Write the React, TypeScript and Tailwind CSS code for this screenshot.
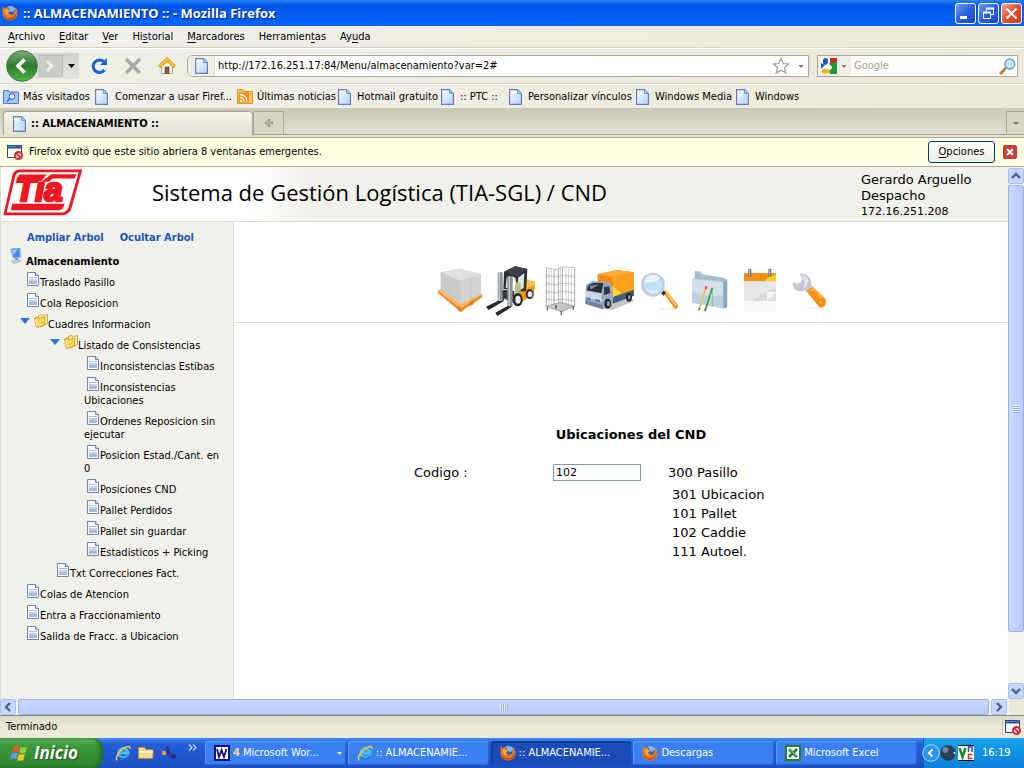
import React from "react";

const ui = "font-['DejaVu_Sans_Condensed','Noto_Sans',sans-serif]";
const verdana = "font-['DejaVu_Sans',sans-serif]";

/* ---------- small icons ---------- */

function Firefox({ className }: { className: string }) {
  return (
    <svg viewBox="0 0 16 16" className={className} aria-hidden="true">
      <circle cx="8.500" cy="7" r="6.400" fill="#2a62c4" />
      <path d="M6 1.500C8 .5 12 1 13.500 4l-3 3-3-1z" fill="#7db8ee" />
      <path d="M1 1l1.800 2.500C3.500 2.500 5 2 6.500 2.500L5.500 4.500l3 1.200-2 1.300c0 2.500 2.500 3.500 5 2.200 1.500-1.200 1.200-3 .5-4.700l1.200.6L13 2.500c2 1.600 2.800 4 2.500 6.500-.6 4-3.800 6.500-7.500 6.500S1 13 .6 9C.4 6 .4 3 1 1z" fill="#ee7a1c" />
      <path d="M1.500 8c1 4 4.500 6 8 5 2.800-.8 4.500-3 5-6 .3 4.500-2.500 7.800-6.500 7.800S1.800 12 1.500 8z" fill="#c4420c" />
      <path d="M2.500 4.500C4 3.500 5 4 5.500 4.500L8 6 6 7.200C5.500 9 6.500 10 8 10.500 5 11 3 9 2.500 4.500z" fill="#f9a935" />
    </svg>
  );
}

function Page({ className = "w-[13px] h-4 shrink-0" }: { className?: string }) {
  return (
    <svg viewBox="0 0 13 16" className={className} aria-hidden="true">
      <defs>
        <linearGradient id="pg" x1="0" y1="0" x2="1" y2="1">
          <stop offset="0" stopColor="#fff" />
          <stop offset="1" stopColor="#a9d4ff" />
        </linearGradient>
      </defs>
      <path d="M.6.600H8.500l3.900 3.900v10.900H.6z" fill="url(#pg)" stroke="#7076b8" strokeWidth="1.200" />
      <path d="M8.500.600v3.900h3.900z" fill="#a8cdf5" stroke="#6a9bd8" strokeWidth="1" />
    </svg>
  );
}

function PopupBlocked({ className = "w-4 h-4 shrink-0" }: { className?: string }) {
  return (
    <svg viewBox="0 0 16 16" className={className} aria-hidden="true">
      <path d="M.5 1.500h14v12H.5z" fill="#fff" stroke="#1c4594" />
      <path d="M0 1h15v3.500H0z" fill="#1f4fa8" />
      <path d="M1 2h8v1H1z" fill="#5a86d8" />
      <path d="M10 2h1.500v1H10zM12.500 2H14v1h-1.500z" fill="#e8583a" />
      <circle cx="11.500" cy="11.500" r="3.500" fill="#fff" stroke="#d8242a" strokeWidth="2" />
      <path d="M9 9l5 5" stroke="#d8242a" strokeWidth="1.800" />
    </svg>
  );
}

function Ie({ className = "w-4 h-4 shrink-0" }: { className?: string }) {
  return (
    <svg viewBox="0 0 16 16" className={className} aria-hidden="true">
      <path d="M12.500 10.500A4.700 4.700 0 1 1 13 7.900H5" fill="none" stroke="#4bbdf3" strokeWidth="3" />
      <path d="M12.800 11.500A5.500 5.500 0 0 1 4 12" fill="none" stroke="#1470c8" strokeWidth="1.400" />
      <path d="M2.500 15C-.5 14.500 3 7 8 3.800 12 1 16 .5 14.800 4" fill="none" stroke="#f8c53c" strokeWidth="1.500" />
    </svg>
  );
}

function Caret({ className }: { className: string }) {
  return (
    <svg viewBox="0 0 7 4" className={className} aria-hidden="true">
      <path d="M0 0h7L3.500 4z" fill="currentColor" />
    </svg>
  );
}

/* ---------- title, menu and navigation bars ---------- */

function TitleBar() {
  const btn =
    "flex h-[21px] w-[21px] items-center justify-center rounded-[3px] border border-white bg-linear-to-br";
  return (
    <header className="flex h-[26px] items-center bg-linear-to-b from-[#2a86f5] via-[#0055e6] via-20% to-[#0366f8] pr-[2px] pl-[2px]">
      <Firefox className="h-4 w-4 shrink-0" />
      <h1 className="ml-[5px] flex-1 truncate font-['Open_Sans',sans-serif] text-[13px] leading-[20px] font-bold text-white [text-shadow:1px_1px_1px_#0a1883]">
        :: ALMACENAMIENTO :: - Mozilla Firefox
      </h1>
      <div className="flex gap-[2px]">
        <button aria-label="Minimizar" className={`${btn} from-[#6f9cf8] via-[#2a5fe0] to-[#1a48c8]`}>
          <svg viewBox="0 0 19 19" className="h-[19px] w-[19px]"><path d="M4 12h7v3H4z" fill="#fff" /></svg>
        </button>
        <button aria-label="Restaurar" className={`${btn} from-[#6f9cf8] via-[#2a5fe0] to-[#1a48c8]`}>
          <svg viewBox="0 0 19 19" className="h-[19px] w-[19px]" fill="none" stroke="#fff">
            <path d="M4.500 8.500h7v6h-7zM7.500 7V4.500h7v6H12" />
            <path d="M4 8.500h8M7 4.500h8" strokeWidth="2" />
          </svg>
        </button>
        <button aria-label="Cerrar" className={`${btn} from-[#f0a088] via-[#e0502e] to-[#c83a14]`}>
          <svg viewBox="0 0 19 19" className="h-[19px] w-[19px]"><path d="M4.500 4.500l10 10M14.500 4.500l-10 10" stroke="#fff" strokeWidth="2.200" /></svg>
        </button>
      </div>
    </header>
  );
}

const menus: [string, string, string][] = [
  ["", "A", "rchivo"],
  ["", "E", "ditar"],
  ["", "V", "er"],
  ["Hi", "s", "torial"],
  ["", "M", "arcadores"],
  ["Herramien", "t", "as"],
  ["Ay", "u", "da"],
];

function MenuBar() {
  return (
    <nav className="flex h-[22px] items-center gap-[14px] border-b border-[#d8d2bd] bg-linear-to-r from-[#f0f0ea] to-[#ede9d8] px-2">
      {menus.map(([a, k, b]) => (
        <button key={k} className="leading-[14px]">
          {a}<u className="underline-offset-2">{k}</u>{b}
        </button>
      ))}
    </nav>
  );
}

function NavBar() {
  return (
    <div className="flex h-[36px] items-center border-t border-b border-t-white border-b-[#d8d2bd] bg-linear-to-r from-[#f0f0ea] to-[#ede9d8] pr-[6px] pl-[6px]">
      <div className="flex h-[26px] w-[73px] shrink-0 items-center rounded-l-full rounded-r-[6px] bg-linear-to-b from-[#d0d0cc] to-[#e4e4df]">
        <button aria-label="Atrás" className="h-8 w-8 shrink-0">
          <svg viewBox="0 0 32 32" className="h-8 w-8">
            <defs>
              <linearGradient id="bk" x1="0" y1="0" x2="0" y2="1">
                <stop offset="0" stopColor="#7fae7c" />
                <stop offset=".5" stopColor="#2c7a2b" />
                <stop offset="1" stopColor="#4fb548" />
              </linearGradient>
            </defs>
            <circle cx="16" cy="16" r="15.300" fill="url(#bk)" stroke="#3c7a3c" />
            <path d="M18.500 9.500L12 16l6.500 6.500" fill="none" stroke="#fff" strokeWidth="3.600" />
          </svg>
        </button>
        <button aria-label="Adelante" className="flex h-[22px] w-[25px] items-center justify-center border border-l-0 border-[#bcbcb8] bg-[#cbcbc8]">
          <svg viewBox="0 0 10 12" className="h-3 w-[10px]"><path d="M2 1l5 5-5 5" fill="none" stroke="#f0f0ee" strokeWidth="2.600" /></svg>
        </button>
        <Caret className="ml-[5px] h-1 w-[7px] text-black" />
      </div>
      <button aria-label="Recargar" className="ml-[11px]">
        <svg viewBox="0 0 18 18" className="h-[18px] w-[18px]">
          <path d="M14 4.800A6.300 6.300 0 1 0 14.500 13" fill="none" stroke="#1b62d6" strokeWidth="3" />
          <path d="M17 1v7h-7z" fill="#1b62d6" />
        </svg>
      </button>
      <button aria-label="Detener" className="ml-4">
        <svg viewBox="0 0 18 18" className="h-[18px] w-[18px]"><path d="M2 2l14 14M16 2L2 16" stroke="#a9a9a5" strokeWidth="3.400" /></svg>
      </button>
      <button aria-label="Inicio" className="ml-4">
        <svg viewBox="0 0 18 18" className="h-[18px] w-[18px]">
          <path d="M3.500 9v7.500h11V9L9 4z" fill="#f4f2ee" stroke="#a8a49a" />
          <path d="M7 10h4v6.500H7z" fill="#8a5a34" stroke="#5d3b20" strokeWidth=".6" />
          <path d="M1.200 10L9 2.300 16.800 10" fill="none" stroke="#d08a10" strokeWidth="3.200" />
          <path d="M1.400 9.700L9 2.300l7.600 7.400" fill="none" stroke="#ffc83a" strokeWidth="1.800" />
        </svg>
      </button>
      <div className="ml-[11px] flex h-[22px] flex-1 items-center rounded-l-[6px] border border-[#aca899] bg-white">
        <div className="flex h-full w-[27px] shrink-0 items-center justify-center rounded-l-[5px] border-r border-[#dedbd0] bg-[#efeee6]">
          <Page />
        </div>
        <input aria-label="Dirección" defaultValue="http://172.16.251.17:84/Menu/almacenamiento?var=2#" className="min-w-0 flex-1 bg-transparent pl-[3px] outline-none" />
        <svg viewBox="0 0 18 18" className="h-[18px] w-[18px] shrink-0" aria-hidden="true">
          <path d="M9 1.500l2.200 5 5.300.5-4 3.500 1.200 5.500L9 13.200 4.300 16l1.200-5.500-4-3.500 5.300-.5z" fill="#fff" stroke="#9c9c98" strokeWidth="1.200" />
        </svg>
        <Caret className="mr-1 ml-2 h-[3px] w-[6px] shrink-0 text-[#77756c]" />
      </div>
      <div className="ml-2 flex h-[22px] w-[201px] shrink-0 items-center border border-[#aca899] bg-white">
        <div className="flex h-full w-[33px] shrink-0 items-center gap-1 bg-[#f1efe6] pl-[3px]">
          <svg viewBox="0 0 16 16" className="h-4 w-4" aria-hidden="true">
            <path d="M0 0h16v16H0z" fill="#fff" />
            <path d="M9 0h7v6H9z" fill="#e31b23" />
            <path d="M8 5l8-1v12H9l-1-3 3-3z" fill="#1a9a3c" />
            <path d="M0 5l4 2-4 4z" fill="#2456c8" />
            <ellipse cx="4.500" cy="3.500" rx="2.600" ry="3.400" fill="#2456c8" />
            <path d="M7 5l4 4-3 3-4-4z" fill="#fff" />
            <ellipse cx="4.500" cy="13.300" rx="4" ry="2.500" fill="#f5b50f" />
          </svg>
          <Caret className="h-[3px] w-[6px] text-[#77756c]" />
        </div>
        <input aria-label="Buscar" placeholder="Google" className="min-w-0 flex-1 bg-transparent pl-[3px] outline-none placeholder:text-[#a19d8f]" />
        <svg viewBox="0 0 17 17" className="mr-[1px] h-[17px] w-[17px] shrink-0" aria-hidden="true">
          <path d="M1 16l6-6" stroke="#c87a38" strokeWidth="3" />
          <circle cx="10.800" cy="6" r="5" fill="#cbe8fb" stroke="#5b9bd8" strokeWidth="1.300" />
        </svg>
      </div>
    </div>
  );
}

/* ---------- bookmarks, tabs, notification ---------- */

function Visited() {
  return (
    <svg viewBox="0 0 16 14" className="h-[14px] w-4 shrink-0" aria-hidden="true">
      <path d="M.5.500h5l1 1.500h9v11.500H.5z" fill="#a4c6f4" stroke="#4a76c4" />
      <circle cx="9" cy="6.500" r="2.800" fill="#e4effd" stroke="#2a5ab8" />
      <path d="M7 8.500l-3 3" stroke="#2a5ab8" strokeWidth="1.500" />
    </svg>
  );
}

function Feed() {
  return (
    <svg viewBox="0 0 16 15" className="h-[15px] w-4 shrink-0" aria-hidden="true">
      <path d="M.5.500h5l1.500 2h8.500v12H.5z" fill="#fbc65a" stroke="#d8961a" />
      <path d="M2 3.500h10v10H2z" fill="#f08a1e" />
      <path d="M3 5.500a7 7 0 0 1 7 7M3 8.500a4 4 0 0 1 4 4" fill="none" stroke="#fff" strokeWidth="1.400" />
      <circle cx="4" cy="12" r="1.100" fill="#fff" />
    </svg>
  );
}

const bookmarks: { label: string; icon: React.ReactNode; box: string }[] = [
  { label: "Más visitados", icon: <Visited />, box: "w-[92px] gap-1" },
  { label: "Comenzar a usar Firef...", icon: <Page />, box: "w-[142px] gap-[7px]" },
  { label: "Últimas noticias", icon: <Feed />, box: "w-[101px] gap-1" },
  { label: "Hotmail gratuito", icon: <Page />, box: "w-[103px] gap-[6px]" },
  { label: ":: PTC ::", icon: <Page />, box: "w-[68px] gap-[6px]" },
  { label: "Personalizar vínculos", icon: <Page />, box: "w-[127px] gap-[6px]" },
  { label: "Windows Media", icon: <Page />, box: "w-[100px] gap-[6px]" },
  { label: "Windows", icon: <Page />, box: "w-[70px] gap-[6px]" },
];

function Bookmarks() {
  return (
    <nav className="flex h-6 items-center border-t border-white bg-linear-to-r from-[#f0f0ea] to-[#ede9d8] pl-[3px]">
      {bookmarks.map((b) => (
        <a key={b.label} href="#" className={`flex items-center whitespace-nowrap ${b.box}`}>
          {b.icon}
          <span>{b.label}</span>
        </a>
      ))}
    </nav>
  );
}

function Tabs() {
  return (
    <div className="flex h-[30px] items-end border-b border-[#aca899] bg-linear-to-b from-[#c9c7b6] to-[#e4e2d2] pb-[2px] pl-[3px]">
      <button className="flex h-[24px] w-[250px] items-center gap-[5px] rounded-t-[4px] border border-b-0 border-[#a5a294] bg-linear-to-b from-[#f6f5ef] to-[#e2e0cf] pl-[9px] font-bold">
        <Page />
        <span>:: ALMACENAMIENTO ::</span>
      </button>
      <button aria-label="Nueva pestaña" className="flex h-[24px] w-[31px] items-center justify-center border border-[#aca899] bg-[#d8d5c5]">
        <svg viewBox="0 0 10 10" className="h-[10px] w-[10px]"><path d="M5 1v8M1 5h8" stroke="#8c8a80" strokeWidth="2.600" /><path d="M5 2v6M2 5h6" stroke="#c4c2b8" strokeWidth="1" /></svg>
      </button>
      <div className="h-[1px] flex-1 bg-[#a5a294]" />
      <button aria-label="Listar pestañas" className="flex h-[24px] w-[18px] items-center justify-center border border-r-0 border-[#aca899] bg-[#d8d5c5]">
        <Caret className="h-[3px] w-[6px] text-[#77756c]" />
      </button>
    </div>
  );
}

function InfoBar() {
  return (
    <div className="flex h-[29px] items-center border-b border-[#aca899] bg-[#ffffe1] pr-[7px] pl-[7px]">
      <PopupBlocked />
      <p className="ml-[6px] flex-1">Firefox evitó que este sitio abriera 8 ventanas emergentes.</p>
      <button className="h-[22px] w-[67px] rounded-[3px] border border-[#003c74] bg-linear-to-b from-white to-[#ecebe5]">
        <u className="underline-offset-2">O</u>pciones
      </button>
      <button aria-label="Cerrar aviso" className="ml-2 flex h-[14px] w-[14px] items-center justify-center rounded-[2px] border border-[#b04040] bg-[#d03c3c]">
        <svg viewBox="0 0 8 8" className="h-2 w-2"><path d="M1 1l6 6M7 1L1 7" stroke="#fff" strokeWidth="2" /></svg>
      </button>
    </div>
  );
}

/* ---------- page header ---------- */

function TiaLogo() {
  return (
    <svg viewBox="9 14 240 140" className="h-[47px] w-20 shrink-0" role="img" aria-label="Tia">
      <path d="M58 15H247L214 132Q208 151 188 152H10L38 30Q43 16 58 15z" fill="#ee1622" />
      <path d="M60 23H236L206 128Q200 143 184 144H20L46 34Q49 24 60 23z" fill="#fff" />
      <path d="M37 118H194Q190 135 178 137H32z" fill="#ee1622" />
      <path d="M58 30H140L124 50H52z" fill="#ee1622" />
      <path d="M124 52L154 29H229L224 42H158L146 52z" fill="#ee1622" />
      <text x="46" y="109" fontFamily="Liberation Sans, sans-serif" fontWeight="bold" fontStyle="italic" fontSize="98" fill="#ee1622" stroke="#ee1622" strokeWidth="8">Tıa</text>
    </svg>
  );
}

function PageHeader() {
  return (
    <header className="flex h-[55px] border-b border-[#dedbd0] bg-[linear-gradient(to_right,#fff_250px,#f2f0eb_310px)] pt-[2px] pl-[2px]">
      <TiaLogo />
      <h2 className="ml-[69px] flex-1 font-['Open_Sans',sans-serif] text-[22px] leading-[46px] whitespace-nowrap text-black">
        Sistema de Gestión Logística (TIA-SGL) / CND
      </h2>
      <div className={`w-[147px] pt-[3px] text-[13px] leading-4 ${verdana}`}>
        <p>Gerardo Arguello</p>
        <p>Despacho</p>
        <p className="text-[11px]">172.16.251.208</p>
      </div>
    </header>
  );
}

/* ---------- sidebar tree ---------- */

function FileIcon() {
  return (
    <svg viewBox="0 0 12 14" className="mr-px ml-[3px] inline h-[14px] w-3 align-baseline" aria-hidden="true">
      <path d="M.5.500h8l3 3v10H.5z" fill="#fff" stroke="#6c86b4" />
      <path d="M8.500 0v3.500H12" fill="#c4d0e4" stroke="#6c86b4" />
      <path d="M2 5h8v1H2zM2 7h8v5H2z" fill="#a9b9dc" />
      <path d="M2 8h8" stroke="#dfe6f4" />
    </svg>
  );
}

function FolderIcon() {
  return (
    <svg viewBox="0 0 14 14" className="inline h-[14px] w-[14px] align-baseline" aria-hidden="true">
      <path d="M4.500 4V1.500l3-1L9 1.500 13.500.5v9L6 13z" fill="#fdf0a8" stroke="#b8961e" strokeWidth=".8" />
      <path d="M.5 4l3-1 1.500 1.500 6-1.500L10 11.500 3 13.500 2 12z" fill="#f9d75a" stroke="#b8961e" strokeWidth=".8" />
      <path d="M1.800 5.500l1 6" stroke="#fdf0a8" strokeWidth="1.400" />
    </svg>
  );
}

type Node = { label: string; children?: Node[] };

const tree: Node[] = [
  { label: "Traslado Pasillo" },
  { label: "Cola Reposicion" },
  {
    label: "Cuadres Informacion",
    children: [
      {
        label: "Listado de Consistencias",
        children: [
          { label: "Inconsistencias Estibas" },
          { label: "Inconsistencias Ubicaciones" },
          { label: "Ordenes Reposicion sin ejecutar" },
          { label: "Posicion Estad./Cant. en 0" },
          { label: "Posiciones CND" },
          { label: "Pallet Perdidos" },
          { label: "Pallet sin guardar" },
          { label: "Estadisticos + Picking" },
        ],
      },
      { label: "Txt Correcciones Fact." },
    ],
  },
  { label: "Colas de Atencion" },
  { label: "Entra a Fraccionamiento" },
  { label: "Salida de Fracc. a Ubicacion" },
];

function Branch({ nodes }: { nodes: Node[] }) {
  return (
    <ul>
      {nodes.map((n) => (
        <li key={n.label}>
          {n.children ? (
            <>
              <a href="#" className="mt-1 block">
                <svg viewBox="0 0 10 6" className="mr-1 mb-1 inline h-[6px] w-[10px] align-baseline" aria-hidden="true">
                  <path d="M0 0h10L5 6z" fill="#2878d8" />
                </svg>
                <FolderIcon />
                {n.label}
              </a>
              <div className="pl-[30px]"><Branch nodes={n.children} /></div>
            </>
          ) : (
            <a href="#" className="mt-1 block pl-1"><FileIcon />{n.label}</a>
          )}
        </li>
      ))}
    </ul>
  );
}

function Sidebar() {
  return (
    <aside className="w-[233px] shrink-0 border-r border-[#dedbd0] bg-[#f2f0eb] pt-[9px] leading-[13px]">
      <div className="flex gap-4 pl-[26px] leading-[14px] font-bold text-[#1a56b8]">
        <a href="#">Ampliar Arbol</a>
        <a href="#">Ocultar Arbol</a>
      </div>
      <div className="mt-[3px] flex h-5 items-start gap-1 pl-[9px] font-bold">
        <svg viewBox="0 0 12 16" className="h-4 w-3 shrink-0" aria-hidden="true">
          <path d="M1 1l9-1 1 9-8 1z" fill="#3d8be8" stroke="#8fa8cc" strokeWidth=".8" />
          <path d="M2 2l6-.7-5 6z" fill="#9ccbfa" />
          <path d="M9.500 1l2 1v8l-1.500.5z" fill="#c4cee0" />
          <path d="M5 10h3l1 2H5z" fill="#8f9cb4" />
          <path d="M1 13l8-1.500 2 1.500-7 2.500z" fill="#c2cde2" stroke="#8fa0be" strokeWidth=".5" />
        </svg>
        <span className="pt-[7px]">Almacenamiento</span>
      </div>
      <div className="pr-2 pl-[19px]"><Branch nodes={tree} /></div>
    </aside>
  );
}

/* ---------- page toolbar ---------- */

const tools: { label: string; box: string; art: React.ReactNode }[] = [
  {
    label: "Pallet",
    box: "12 30 153 153",
    art: (
      <>
        <path d="M24 106L92 160V170L24 114zM92 160L156 118V127L92 170z" fill="#f08a1e" />
        <path d="M24 106L90 75 156 118 92 160z" fill="#ffb45c" />
        <path d="M84 153l10 6v13l-10-6zM118 142l12-7v13l-12 6z" fill="#e07a10" />
        <path d="M32 52L88 41 152 58V116L92 147 32 105z" fill="#c9cacb" />
        <path d="M32 52L88 41 152 58 92 77z" fill="#dfe0e1" />
        <path d="M92 77L152 58V116L92 147z" fill="#d2d3d4" />
        <path d="M57 62V122M122 68V131" stroke="#bfc0c2" strokeWidth="1.500" />
        <path d="M57 62L118 47M60 46l60 22" stroke="#e8e8e9" strokeWidth="2" fill="none" />
      </>
    ),
  },
  {
    label: "Montacargas",
    box: "165 30 153 153",
    art: (
      <>
        <path d="M168 155L214 133 222 138 176 165zM196 173L238 150 246 155 202 183z" fill="#26282c" />
        <path d="M206 105L222 110V136H206z" fill="#3a3d42" />
        <path d="M286 73L314 80Q318 108 305 120L262 152 246 140 262 108 288 100z" fill="#f79a18" />
        <path d="M288 73L314 80 312 92 288 98z" fill="#ffc14a" />
        <path d="M222 50L256 34 292 42 288 108 262 110 256 68 246 64 238 104 220 102z" fill="#2b2d33" />
        <path d="M230 68L246 68 238 100 227 98z" fill="#dfe5e6" />
        <path d="M264 68L283 54 281 100 262 108z" fill="#dde5dc" />
        <path d="M256 86q8-10 16 0l1 22-20 6z" fill="#b8c08c" />
        <path d="M222 50L256 34 292 42 264 66z" fill="#3c3f45" />
        <path d="M218 104L252 108 256 146 218 128z" fill="#34373c" />
        <ellipse cx="263" cy="134" rx="15" ry="20" fill="#26282c" />
        <ellipse cx="264" cy="134" rx="8" ry="12" fill="#e8eaec" />
        <ellipse cx="299" cy="118" rx="12" ry="15" fill="#26282c" />
        <ellipse cx="300" cy="118" rx="7" ry="9" fill="#e8eaec" />
        <path d="M203 52h15v86h-15zM232 64h16v90h-16z" fill="#8f9398" />
        <path d="M206 52h4v86h-4zM236 64h4v90h-4z" fill="#c8cacd" />
      </>
    ),
  },
  {
    label: "Caddie",
    box: "318 30 153 153",
    art: (
      <g fill="none" stroke="#a4a6a8">
        <path d="M349 38V154M397 35V150M434 38V152M372 43V158M385 40V148" strokeWidth="3" />
        <path d="M357 40v108M364 42v106M408 36v110M416 37v112M425 37v112M391 38v106" stroke="#bcbec0" strokeWidth="2" />
        <path d="M349 38L378 44 397 35 434 38M349 62L378 66 397 62 434 64M349 85L378 90 397 84 434 88M349 110L378 114 397 108 434 114M349 132L378 136 397 132 434 138" strokeWidth="2" />
        <path d="M347 154L392 142 434 154 394 170z" fill="#c4c6c8" strokeWidth="3" />
        <path d="M352 156v10M394 168v13M430 154v10M378 150v12" stroke="#5c5e60" strokeWidth="4" />
      </g>
    ),
  },
  {
    label: "Despacho",
    box: "471 30 153 153",
    art: (
      <>
        <path d="M470 150L545 166 612 138 600 128z" fill="#c4c5c7" />
        <path d="M503 58L561 45 612 52V118L548 142 540 84 503 80z" fill="#f68a10" />
        <path d="M503 58L561 45 612 52 546 66z" fill="#ffac3c" />
        <path d="M546 66L612 52V104L548 126z" fill="#f9a01c" />
        <path d="M548 126V92L576 116z" fill="#ffd83c" />
        <path d="M548 126L612 104V122L548 146z" fill="#3d5e7c" />
        <path d="M468 90L486 78 534 80 544 90 550 128 546 156 518 162 466 140z" fill="#9aa8ba" />
        <path d="M476 90L490 84H520L514 114 470 106z" fill="#26303c" />
        <path d="M478 92L508 88 482 104z" fill="#7d8c9c" />
        <path d="M522 96L538 94 541 114 522 120z" fill="#2f3a48" />
        <path d="M468 108L514 116 516 140 466 128z" fill="#d0d8e2" />
        <path d="M466 136L518 150V163L466 146z" fill="#6a829e" />
        <path d="M470 126l12 3v7l-12-3zM496 132l14 3v7l-14-3z" fill="#2f86e0" />
        <ellipse cx="533" cy="146" rx="10" ry="15" fill="#20242a" />
        <ellipse cx="535" cy="146" rx="5" ry="8" fill="#8e98a4" />
        <ellipse cx="597" cy="127" rx="9" ry="13" fill="#20242a" />
        <ellipse cx="598" cy="127" rx="4" ry="7" fill="#8e98a4" />
      </>
    ),
  },
  {
    label: "Buscar",
    box: "24 30 153 153",
    art: (
      <>
        <path d="M90 160h50v4H90z" fill="#f0f0f0" />
        <path d="M98 112l9-8 37 46q1 9-9 12z" fill="#f58f17" />
        <path d="M104 112l4-4 33 42-4 4z" fill="#ffc774" />
        <path d="M92 114l8-8 7 8-6 8z" fill="#20242a" />
        <circle cx="69" cy="89" r="33" fill="#bfe2fb" stroke="#b9bec6" strokeWidth="6" />
        <circle cx="69" cy="89" r="35" fill="none" stroke="#eceef1" strokeWidth="2" />
        <path d="M42 82a28 28 0 0 1 48-14q-10 18-48 14z" fill="#eaf6ff" />
        <path d="M48 104q20 20 44 0-20 6-44 0z" fill="#e2f3ff" />
      </>
    ),
  },
  {
    label: "Documentos",
    box: "177 30 153 153",
    art: (
      <>
        <path d="M195 48L212 50 216 58 280 68 292 74V156L282 160 190 140z" fill="#a3bccf" />
        <path d="M186 70L278 80 290 74V158L276 160 186 144z" fill="#bdd0de" />
        <path d="M186 72L280 82V120Q230 130 186 108z" fill="#d3e0ea" />
        <path d="M280 80L291 75V157L280 160z" fill="#8aa6ba" />
        <path d="M227 98L208 162" stroke="#e8c660" strokeWidth="6" />
        <path d="M229 94l-2 8" stroke="#d8434a" strokeWidth="6" />
        <path d="M247 98L226 166" stroke="#3c9c3c" strokeWidth="5" />
        <path d="M207 158l-3 10 7-6zM225 160l-3 10 7-6z" fill="#4a4238" />
        <path d="M248 106V156" stroke="#8aa6ba" strokeWidth="2" />
      </>
    ),
  },
  {
    label: "Calendario",
    box: "330 30 153 153",
    art: (
      <>
        <path d="M342 140H438V170H342z" fill="#f8f8f8" />
        <path d="M342 54H438V138H342z" fill="#d9dadc" />
        <path d="M342 80H438V100Q400 108 370 138H342z" fill="#e6e7e8" />
        <path d="M342 54H438V78H342z" fill="#f79114" />
        <path d="M405 78Q415 58 438 60V78z" fill="#ffd21e" />
        <path d="M412 138V112H438" fill="#f6f6f6" stroke="#fff" strokeWidth="2" />
        <path d="M414 136L436 114V136z" fill="#e4e5e6" />
        <path d="M355 42h9v24h-9zM415 42h9v24h-9z" fill="#77797c" />
        <path d="M357 44h3v20h-3zM417 44h3v20h-3z" fill="#b0b2b5" />
      </>
    ),
  },
  {
    label: "Herramientas",
    box: "483 30 153 153",
    art: (
      <>
        <path d="M530 158h40v4h-40z" fill="#f0f0f0" />
        <path d="M511 57Q526 55 536 66 544 76 541 88L550 98 534 110 525 104Q508 112 496 102 488 94 489 84L504 88 516 80 518 70z" fill="#c6c9d2" stroke="#a4a8b2" strokeWidth="1.500" />
        <path d="M515 60q14 2 20 14l-4 20-22 10q20-6 14-24z" fill="#e4e6ec" />
        <path d="M529 108L548 95 587 132Q591 142 585 152 578 160 568 157z" fill="#f5931a" />
        <path d="M534 110L549 99 582 131 570 128 548 106z" fill="#ffb84a" />
        <path d="M546 116l8-8 10 10" fill="none" stroke="#c86e08" strokeWidth="2" />
        <circle cx="573" cy="142" r="7" fill="#ffb03c" stroke="#cf7408" strokeWidth="2" />
      </>
    ),
  },
];

function Toolbar() {
  return (
    <nav className="flex h-[101px] items-end justify-center border-b border-[#dedbd0] pb-[6px] pl-[34px]">
      {tools.map((t) => (
        <button key={t.label} aria-label={t.label}>
          <svg viewBox={t.box} className="block h-[51px] w-[51px] overflow-visible">{t.art}</svg>
        </button>
      ))}
    </nav>
  );
}

/* ---------- form ---------- */

function Form() {
  return (
    <form className={`mx-auto mt-[104px] w-[414px] text-[13px] leading-4 ${verdana}`} onSubmit={(e) => e.preventDefault()}>
      <h3 className="pl-5 text-center font-bold">Ubicaciones del CND</h3>
      <div className="mt-[18px] grid grid-cols-[139px_115px_1fr] items-start">
        <label htmlFor="codigo" className="leading-6">Codigo :</label>
        <div className="flex h-6 items-start">
          <input id="codigo" defaultValue="102" className="mt-[3px] h-[17px] w-[88px] border border-[#7f9db9] bg-white pl-[2px] text-[11px] outline-none" />
        </div>
        <ul>
          <li className="leading-6">300 Pasillo</li>
          {["301 Ubicacion", "101 Pallet", "102 Caddie", "111 Autoel."].map((t) => (
            <li key={t} className="pl-1 leading-[19px]">{t}</li>
          ))}
        </ul>
      </div>
    </form>
  );
}

/* ---------- scroll bars ---------- */

const arrows = {
  up: "M4 10l4-4 4 4",
  down: "M4 6l4 4 4-4",
  left: "M10 4L6 8l4 4",
  right: "M6 4l4 4-4 4",
};

function ScrollButton({ dir, label }: { dir: keyof typeof arrows; label: string }) {
  return (
    <button aria-label={label} className="h-4 w-4 shrink-0 rounded-[2px] border border-[#a9bff0] bg-[#c6d6fc]">
      <svg viewBox="1 1 14 14" className="h-[14px] w-[14px]"><path d={arrows[dir]} fill="none" stroke="#4d6185" strokeWidth="2.400" /></svg>
    </button>
  );
}

function VerticalScroll() {
  return (
    <div className="flex w-4 shrink-0 flex-col gap-px bg-[#f5f4ef] pt-px">
      <ScrollButton dir="up" label="Subir" />
      <div className="flex grow-[9] flex-col items-center justify-center gap-px rounded-[2px] border border-[#98b0e8] bg-linear-to-r from-[#c9d8fd] to-[#b9cbf9]">
        {[0, 1, 2, 3].map((i) => <i key={i} className="h-px w-[7px] bg-[#eef4fe] shadow-[0_1px_0_#8cb0f8]" />)}
      </div>
      <div className="grow" />
      <ScrollButton dir="down" label="Bajar" />
    </div>
  );
}

function HorizontalScroll() {
  return (
    <div className="flex h-[17px] shrink-0 gap-[2px] border-b border-[#8f8d80] bg-[#f5f4ef]">
      <ScrollButton dir="left" label="Izquierda" />
      <div className="flex flex-1 items-center justify-center gap-px rounded-[2px] border border-[#98b0e8] bg-linear-to-b from-[#c9d8fd] to-[#b9cbf9]">
        {[0, 1, 2, 3].map((i) => <i key={i} className="h-[7px] w-px bg-[#eef4fe] shadow-[1px_0_0_#8cb0f8]" />)}
      </div>
      <ScrollButton dir="right" label="Derecha" />
      <div className="w-[15px] bg-[#ece9d8]" />
    </div>
  );
}

/* ---------- status and task bars ---------- */

function StatusBar() {
  return (
    <div className="flex h-[22px] items-center justify-between bg-linear-to-b from-[#dcd9c8] via-[#ece9d8] to-[#ece9d8] pr-[3px] pl-[6px]">
      <span>Terminado</span>
      <div className="flex items-center gap-[2px] border-l border-[#c9c6b6] pl-[2px]"><PopupBlocked /></div>
    </div>
  );
}

function WordIcon() {
  return (
    <svg viewBox="0 0 16 16" className="h-4 w-4 shrink-0" aria-hidden="true">
      <path d="M0 0h16v16H0z" fill="#10147c" />
      <path d="M2 2h12v12H2z" fill="#fff" />
      <path d="M3 4l2 8 2.500-7L10 12l2.500-8" fill="none" stroke="#10147c" strokeWidth="1.800" />
    </svg>
  );
}

function ExcelIcon() {
  return (
    <svg viewBox="0 0 16 16" className="h-4 w-4 shrink-0" aria-hidden="true">
      <path d="M0 0h16v16H0z" fill="#2a7a34" />
      <path d="M2 2h12v12H2z" fill="#fff" />
      <path d="M4 4l8 8M12 4l-8 8" stroke="#1f7a2c" strokeWidth="2.600" />
      <path d="M4.500 4l7.500 7.500" stroke="#fff" strokeWidth=".7" />
    </svg>
  );
}

const tasks: { label: string; icon: React.ReactNode; count?: string; active?: boolean }[] = [
  { label: "Microsoft Wor...", icon: <WordIcon />, count: "4" },
  { label: ":: ALMACENAMIE...", icon: <Ie /> },
  { label: ":: ALMACENAMIE...", icon: <Firefox className="h-4 w-4 shrink-0" />, active: true },
  { label: "Descargas", icon: <Firefox className="h-4 w-4 shrink-0" /> },
  { label: "Microsoft Excel", icon: <ExcelIcon /> },
];

function TaskBar() {
  return (
    <footer className="flex h-[30px] items-center bg-linear-to-b from-[#3f8cf3] via-[#245edb] via-20% to-[#1d4fc0] text-white">
      <button className="flex h-full w-[103px] shrink-0 items-center gap-1 rounded-r-[10px] bg-linear-to-b from-[#6cbc68] via-[#3a9a3a] via-25% to-[#2f8530] pl-[10px] shadow-[inset_-3px_0_4px_#1f6a22]">
        <svg viewBox="0 0 20 20" className="h-5 w-5" aria-hidden="true">
          <path d="M3.500 3.500q3-2 6-.3L8 9.200q-3-1.500-6 .2z" fill="#f0562a" />
          <path d="M10.500 3.800q3 1.500 6.500-.3l-1.600 6q-3 1.800-6.300.3z" fill="#8ccf3c" />
          <path d="M1.700 10.500q3-1.700 6-.2l-1.500 6q-3-1.500-6 .2z" fill="#5a9cf5" />
          <path d="M8.800 11q3 1.500 6.200-.2l-1.600 6q-3 1.700-6.200.2z" fill="#fbc82c" />
        </svg>
        <span className="font-['Open_Sans',sans-serif] text-[17px] leading-6 font-bold italic [text-shadow:1px_1px_2px_#1c4a1c]">Inicio</span>
      </button>
      <div className="flex w-[102px] shrink-0 items-center gap-[7px] pl-3">
        <Ie />
        <svg viewBox="0 0 16 16" className="h-4 w-4" aria-hidden="true">
          <path d="M.5 2.500h6l1.500 2h7v9H.5z" fill="#f7dd8c" stroke="#b58a2c" />
          <path d="M1 7h14" stroke="#fff6cf" strokeWidth="2" />
        </svg>
        <svg viewBox="0 0 16 16" className="h-4 w-4" aria-hidden="true">
          <path d="M6 4l2 5 5 2" stroke="#1c2f88" strokeWidth="2.500" fill="none" />
          <circle cx="6.500" cy="3" r="2.200" fill="#27409c" />
          <circle cx="3" cy="8" r="2.300" fill="#f79a2c" />
          <circle cx="9" cy="10" r="2.600" fill="#27409c" />
          <circle cx="12.500" cy="11.500" r="2.600" fill="#1c2f88" />
        </svg>
        <svg viewBox="0 0 9 7" className="mb-3 ml-1 h-[7px] w-[9px]" aria-hidden="true">
          <path d="M1 .5l3 3-3 3M5 .5l3 3-3 3" fill="none" stroke="#cfe0fb" strokeWidth="1.200" />
        </svg>
      </div>
      <div className="flex min-w-0 flex-1 gap-[2px] pr-[6px]">
        {tasks.map((t, i) => (
          <button
            key={i}
            className={`flex h-6 min-w-0 flex-1 items-center gap-[3px] rounded-[3px] pl-[9px] whitespace-nowrap ${
              t.active
                ? "bg-[#1a4cb8] shadow-[inset_1px_1px_2px_#0f2f80]"
                : "bg-[#3b80f2] shadow-[inset_1px_1px_0_#5c9af8,inset_-1px_-1px_1px_#2a62d0]"
            }`}
          >
            {t.icon}
            {t.count && <b className="text-[#fbd38a]">{t.count}</b>}
            <span className="truncate">{t.label}</span>
            {t.count && <Caret className="mr-1 ml-auto h-[3px] w-[5px] shrink-0 text-white" />}
          </button>
        ))}
      </div>
      <div className="flex h-full w-[101px] shrink-0 items-center border-l border-[#0c5cc8] bg-linear-to-b from-[#2aa4f5] via-[#119be8] via-20% to-[#0f80d8]">
        <svg viewBox="0 0 18 18" className="-ml-[2px] h-[18px] w-[18px]" aria-hidden="true">
          <circle cx="9" cy="9" r="8.300" fill="#2a94ee" stroke="#b8dcfa" />
          <path d="M10.500 5.500L7 9l3.500 3.500" fill="none" stroke="#fff" strokeWidth="2" />
        </svg>
        <svg viewBox="0 0 16 16" className="h-4 w-4" aria-hidden="true">
          <circle cx="8" cy="8" r="7.700" fill="#2c3e58" />
          <circle cx="5.500" cy="5" r="3" fill="#6c88a8" />
          <circle cx="14.500" cy="8" r="1" fill="#fff" />
        </svg>
        <svg viewBox="0 0 16 16" className="ml-[2px] h-4 w-4" aria-hidden="true">
          <path d="M0 0h16v16H0z" fill="#fff" />
          <path d="M0 .5h16M0 15.500h16" stroke="#111" />
          <path d="M1.500 3l3 9 3-9" fill="none" stroke="#168a1c" strokeWidth="2.400" />
          <path d="M10.500 7V2h3.500v5" fill="none" stroke="#2348c8" strokeWidth="1.500" />
          <path d="M14.500 9.500h-4v4h4" fill="none" stroke="#d8242a" strokeWidth="1.500" />
        </svg>
        <time className="ml-2">16:19</time>
      </div>
    </footer>
  );
}

export default function App() {
  return (
    <div className={`flex min-h-screen flex-col bg-[#ece9d8] text-[11px] leading-[14px] text-black ${ui}`}>
      <TitleBar />
      <MenuBar />
      <NavBar />
      <Bookmarks />
      <Tabs />
      <InfoBar />
      <div className="flex flex-1 bg-white">
        <div className="flex min-w-0 flex-1 flex-col border-l border-[#dedbd0]">
          <PageHeader />
          <div className="flex flex-1">
            <Sidebar />
            <main className="min-w-0 flex-1">
              <Toolbar />
              <Form />
            </main>
          </div>
        </div>
        <VerticalScroll />
      </div>
      <HorizontalScroll />
      <StatusBar />
      <TaskBar />
    </div>
  );
}
